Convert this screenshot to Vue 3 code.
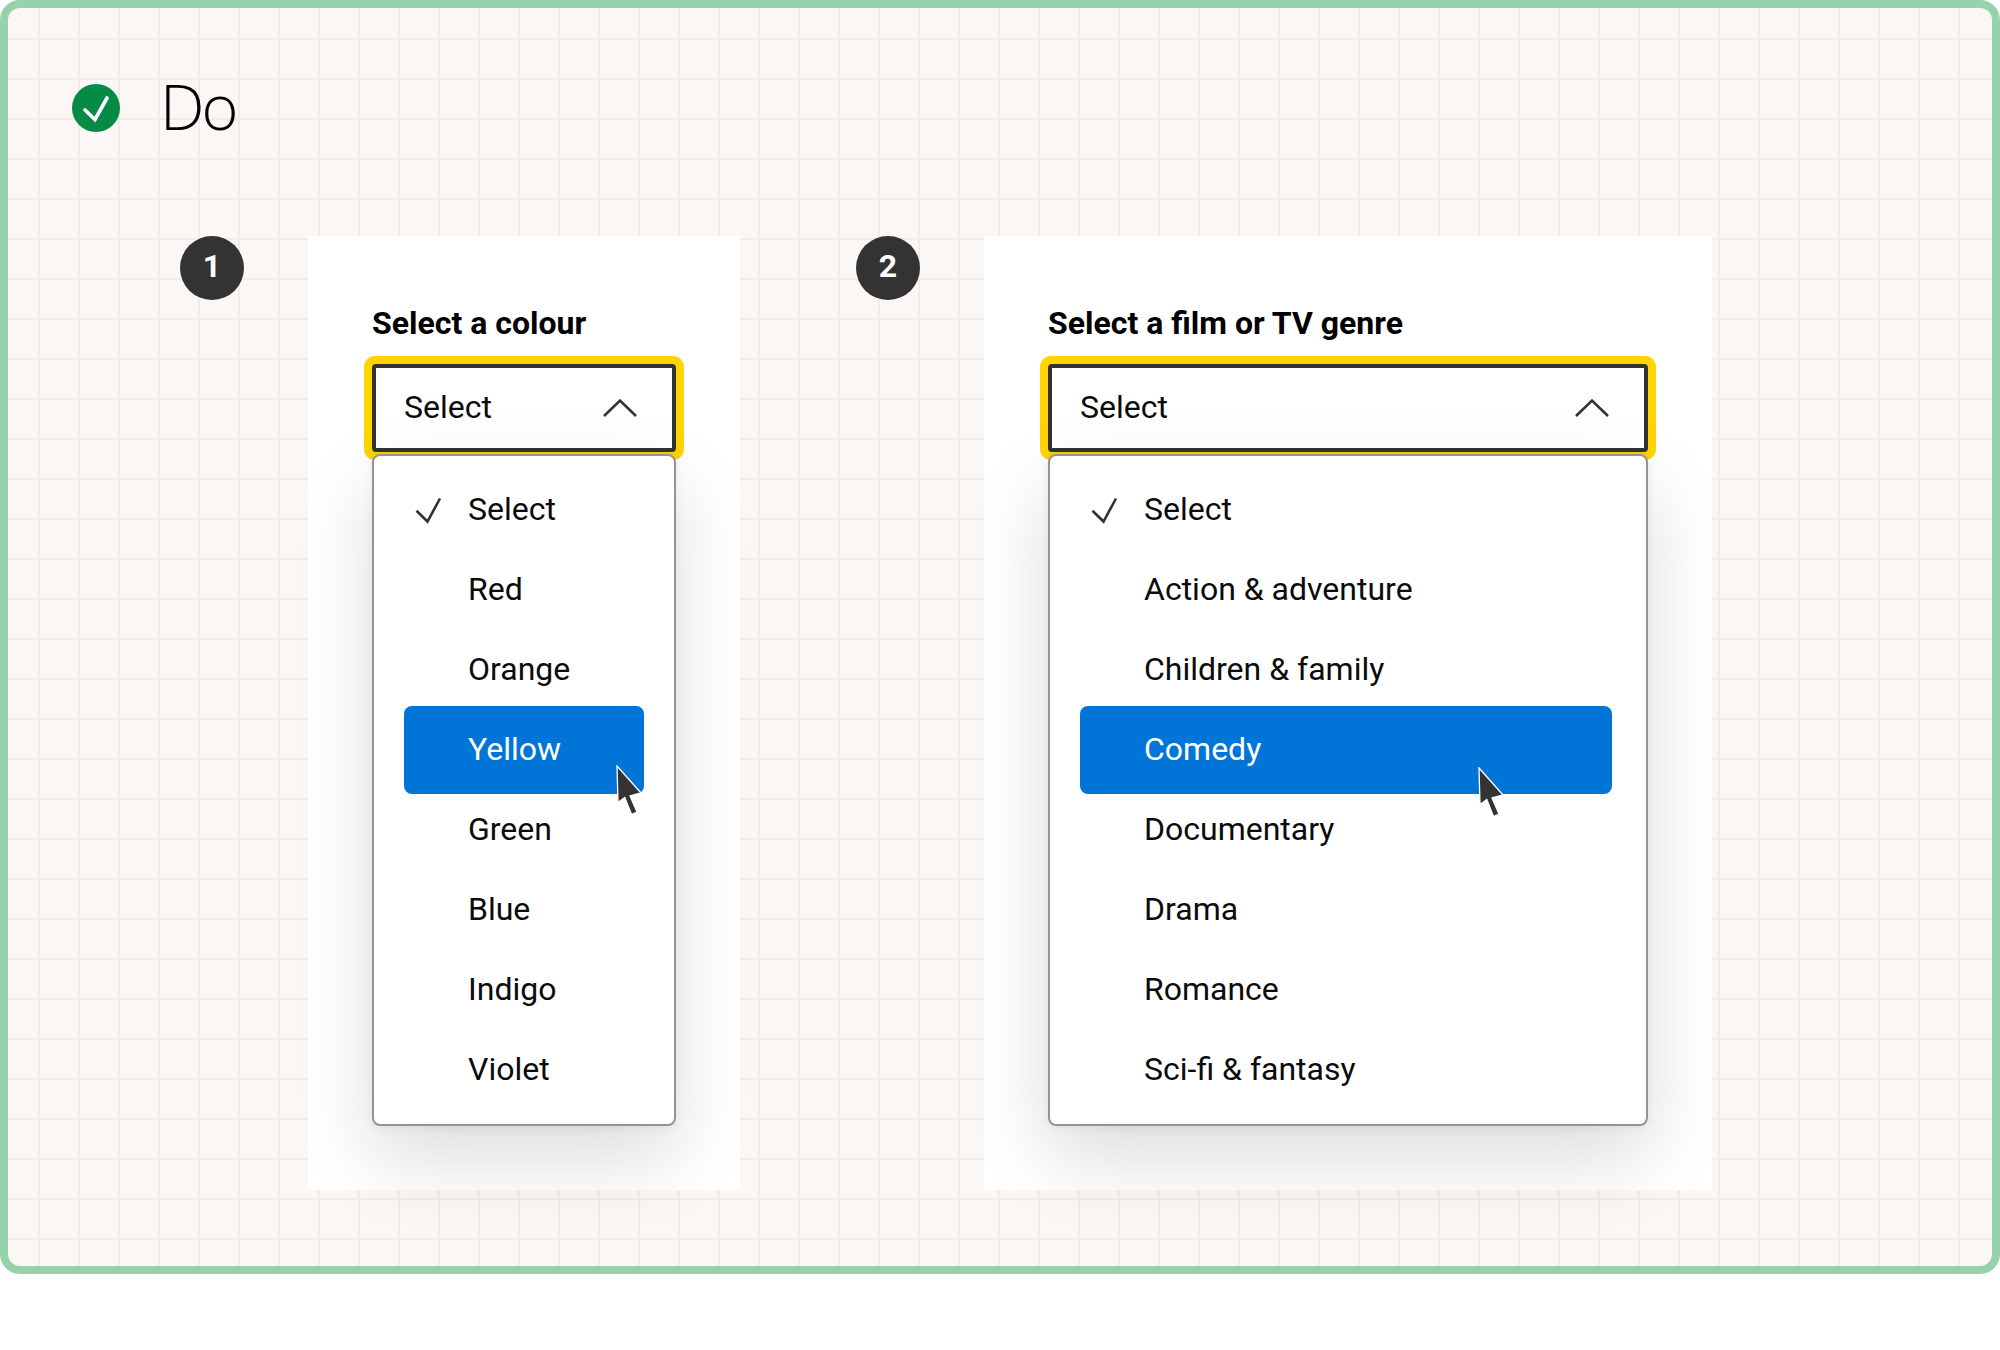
<template>
  <div class="page">
    <div class="frame">
      <header class="heading">
        <svg class="do-icon" width="48" height="48" viewBox="0 0 48 48">
          <circle cx="24" cy="24" r="24" fill="#058b45" />
          <polyline points="13,26 23,35.5 35,14" fill="none" stroke="#fff" stroke-width="3.6" stroke-linecap="round" stroke-linejoin="miter" />
        </svg>
        <h1>Do</h1>
      </header>

      <div class="examples">
        <section v-for="ex in examples" :key="ex.num" class="example" :class="ex.cls">
          <div class="badge">{{ ex.num }}</div>
          <div class="card">
            <div class="label">{{ ex.label }}</div>
            <div class="select">
              <span class="value">Select</span>
              <svg width="34" height="18" viewBox="0 0 34 18">
                <polyline points="1,17 17,1.6 33,17" fill="none" stroke="#333" stroke-width="2.6" />
              </svg>
            </div>
            <ul class="menu">
              <li v-for="(opt, i) in ex.options" :key="opt" class="row" :class="{ active: opt === ex.active }">
                <span class="tick">
                  <svg v-if="i === 0" width="24" height="24" viewBox="0 0 24 24">
                    <polyline points="0.5,12.7 11.5,23.5 24,0.5" fill="none" stroke="#333" stroke-width="2.6" />
                  </svg>
                </span>
                <span class="text">{{ opt }}</span>
                <svg
                  v-if="opt === ex.active"
                  class="cursor"
                  :style="{ left: ex.cursor[0] + 'px', top: ex.cursor[1] + 'px' }"
                  width="27"
                  height="52"
                  viewBox="0 0 27 52"
                >
                  <path d="M1 1 L25 28 L14 31 L21 47 L15.5 49.5 L8.8 32.5 L2 37.5 Z" fill="#333" stroke="#fff" stroke-width="1.3" />
                </svg>
              </li>
            </ul>
          </div>
        </section>
      </div>
    </div>
  </div>
</template>

<script setup>
const examples = [
  {
    num: 1,
    cls: 'narrow',
    label: 'Select a colour',
    active: 'Yellow',
    cursor: [212, 59],
    options: ['Select', 'Red', 'Orange', 'Yellow', 'Green', 'Blue', 'Indigo', 'Violet'],
  },
  {
    num: 2,
    cls: 'wide',
    label: 'Select a film or TV genre',
    active: 'Comedy',
    cursor: [398, 61],
    options: ['Select', 'Action & adventure', 'Children & family', 'Comedy', 'Documentary', 'Drama', 'Romance', 'Sci-fi & fantasy'],
  },
]
</script>

<style>
html,
body {
  margin: 0;
  background: #fff;
}
</style>

<style scoped>
.page {
  height: 1350px;
  font-family: Roboto, "Liberation Sans", sans-serif;
  color: #0b0b0b;
}

.frame {
  box-sizing: border-box;
  height: 1274px;
  padding: 76px 64px 76px 64px;
  border: 8px solid #96d3aa;
  border-radius: 20px;
  background-color: #faf7f4;
  background-image:
    linear-gradient(90deg, #f0ece8 2px, transparent 2px),
    linear-gradient(180deg, #f0ece8 2px, transparent 2px);
  background-size: 40px 40px;
  background-position: 30px 30px;
}

.heading {
  display: flex;
  align-items: center;
  gap: 40px;
  height: 48px;
}

.heading h1 {
  margin: -4px 0 0;
  font-family: "Open Sans", sans-serif;
  font-weight: 300;
  font-size: 63px;
  letter-spacing: -3px;
  line-height: 48px;
  color: #000;
}

.examples {
  display: flex;
  gap: 116px;
  margin-top: 104px;
  padding-left: 108px;
}

.example {
  display: flex;
  gap: 64px;
}

.badge {
  width: 64px;
  height: 64px;
  border-radius: 50%;
  background: #333;
  color: #fff;
  font-weight: 700;
  font-size: 32px;
  line-height: 60px;
  text-align: center;
}

.card {
  padding: 64px;
  background: #fff;
}

.narrow .card {
  width: 304px;
}

.wide .card {
  width: 600px;
}

.label {
  margin-bottom: 18px;
  font-size: 32px;
  font-weight: 700;
  line-height: 46px;
  color: #000;
}

.select {
  box-sizing: border-box;
  display: flex;
  align-items: center;
  justify-content: space-between;
  height: 88px;
  padding: 0 35px 0 28px;
  border: 4px solid #333;
  border-radius: 4px;
  box-shadow: 0 0 0 8px #ffd400;
  font-size: 32px;
  background: #fff;
}

.value,
.text {
  position: relative;
  top: -1px;
}

.menu {
  position: relative;
  box-sizing: border-box;
  margin: 2px 0 0;
  padding: 14px 30px;
  list-style: none;
  border: 2px solid #949494;
  border-radius: 8px;
  background: #fff;
  box-shadow: 0 32px 80px rgba(0, 0, 0, 0.14), 0 2px 8px rgba(0, 0, 0, 0.06);
}

.wide .menu {
  padding-right: 34px;
}

.row {
  position: relative;
  display: flex;
  align-items: center;
  height: 80px;
  padding-left: 12px;
  font-size: 32px;
}

.row.active {
  height: 88px;
  margin: -4px 0;
  border-radius: 8px;
  background: #0075d8;
  color: #fff;
}

.tick {
  display: flex;
  width: 24px;
  height: 24px;
  margin-right: 28px;
}

.tick svg {
  overflow: visible;
}

.cursor {
  position: absolute;
}
</style>
